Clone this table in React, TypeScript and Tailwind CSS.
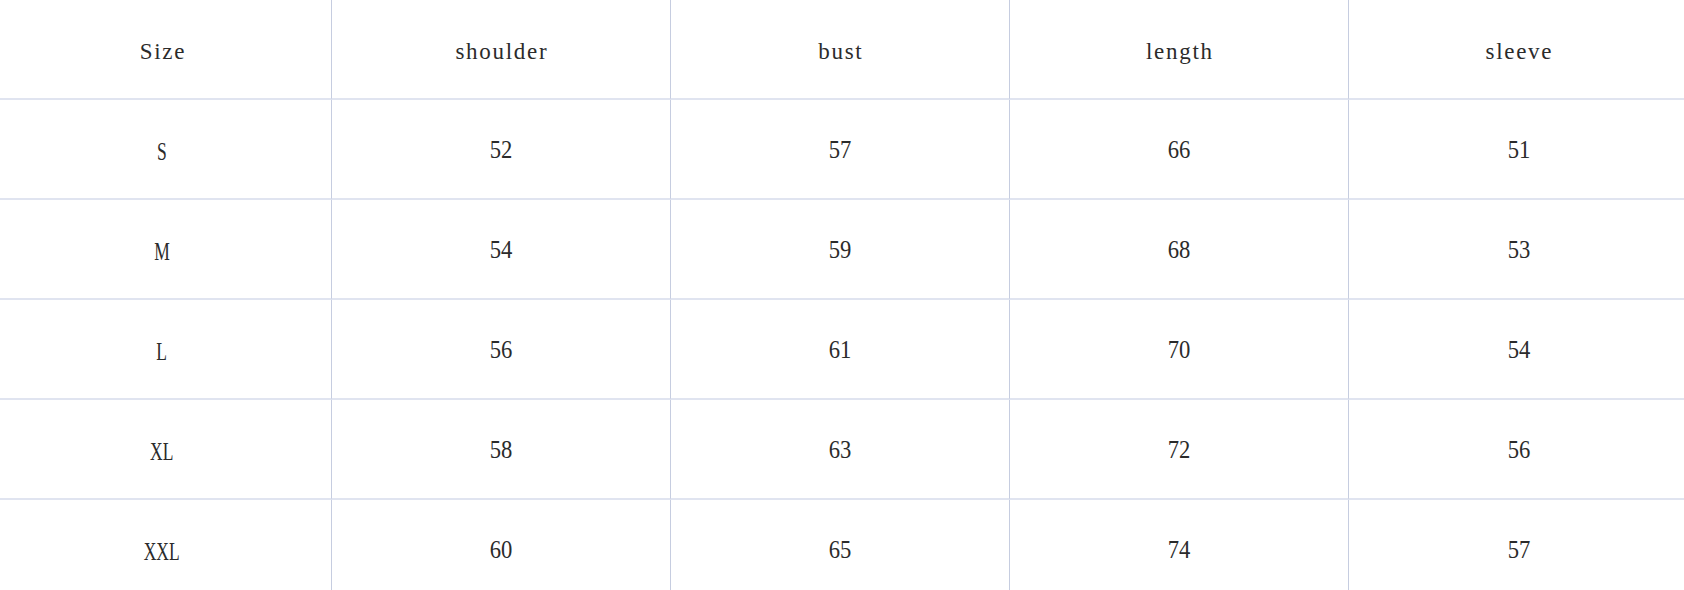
import React from 'react';

const headers = ['Size', 'shoulder', 'bust', 'length', 'sleeve'];

const rows: [string, number, number, number, number][] = [
  ['S', 52, 57, 66, 51],
  ['M', 54, 59, 68, 53],
  ['L', 56, 61, 70, 54],
  ['XL', 58, 63, 72, 56],
  ['XXL', 60, 65, 74, 57],
];

const Cell = ({ children, last }: { children: React.ReactNode; last?: boolean }) => (
  <div
    className={`h-[100px] flex items-center justify-center border-b-2 border-[#e0e4f0] text-[#2b2b2b] font-['Liberation_Serif',serif] ${
      last ? '' : 'border-r border-r-[#c6cde0]'
    }`}
  >
    {children}
  </div>
);

// header words: wide tracking mimics the monospaced SimSun latin
const Word = ({ text }: { text: string }) => (
  <span className="inline-block text-[23px] leading-none tracking-[1.7px] pl-[1.7px] translate-y-[2px]">{text}</span>
);

const SizeLabel = ({ text }: { text: string }) => (
  <span className="inline-block text-[25px] leading-none scale-x-[0.7] translate-y-[2px]">{text}</span>
);

const Num = ({ value }: { value: number }) => (
  <span className="inline-block text-[26px] leading-none scale-x-[0.87] translate-y-[1px]">{value}</span>
);

export default function App() {
  return (
    <div className="h-screen w-full overflow-hidden bg-white">
      <div className="-ml-[7px] w-[1695px] grid grid-cols-5">
        {headers.map((h, i) => (
          <Cell key={h} last={i === 4}>
            <Word text={h} />
          </Cell>
        ))}
        {rows.map((r) =>
          r.map((v, i) => (
            <Cell key={`${r[0]}-${i}`} last={i === 4}>
              {typeof v === 'string' ? <SizeLabel text={v} /> : <Num value={v} />}
            </Cell>
          ))
        )}
      </div>
    </div>
  );
}
